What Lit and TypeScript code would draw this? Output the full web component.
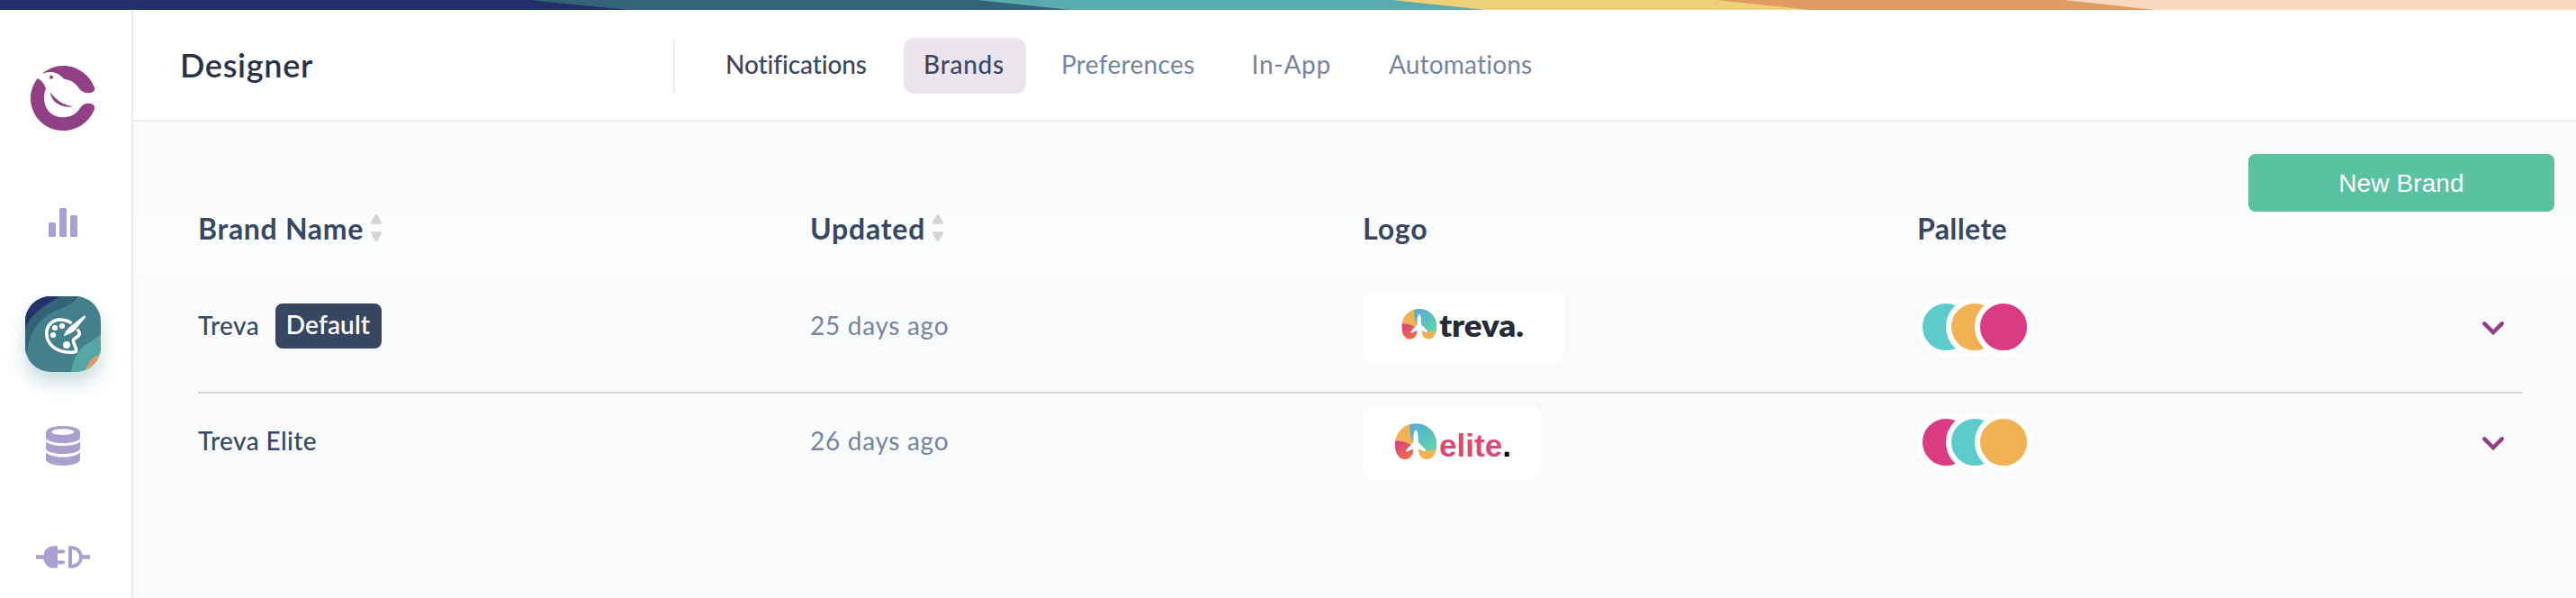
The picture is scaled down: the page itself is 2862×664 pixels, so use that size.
import { LitElement, html, svg, css } from "lit";

interface Brand {
  name: string;
  isDefault: boolean;
  updated: string;
  logo: "treva" | "elite";
  palette: string[];
}

const BRANDS: Brand[] = [
  { name: "Treva", isDefault: true, updated: "25 days ago", logo: "treva", palette: ["teal", "amber", "pink"] },
  { name: "Treva Elite", isDefault: false, updated: "26 days ago", logo: "elite", palette: ["pink", "teal", "amber"] },
];

/* Coloured stripe along the top edge of the window */
class TopStripe extends LitElement {
  static styles = css`
    :host, svg { display: block; }
    svg { width: 100%; height: 11px; }
  `;
  render() {
    return html`<svg viewBox="0 0 2862 11" preserveAspectRatio="none">
      <rect width="2862" height="11" fill="#fad9bf" />
      <polygon points="0,0 2293,0 2394,11 0,11" fill="#e19a62" />
      <polygon points="0,0 1907,0 2011,11 0,11" fill="#eed079" />
      <polygon points="0,0 1547,0 1650,11 0,11" fill="#59abae" />
      <polygon points="0,0 1086,0 1189,11 0,11" fill="#346379" />
      <polygon points="0,0 589,0 698,11 0,11" fill="#23306a" />
    </svg>`;
  }
}
customElements.define("top-stripe", TopStripe);

/* Icon rail on the left */
class SideRail extends LitElement {
  static styles = css`
    :host {
      display: flex; flex-direction: column; align-items: center;
      box-sizing: border-box; width: 148px; padding: 62px 6px 0 0;
      border-right: 2px solid #e9edf0; background: #fff; color: #ab9fcf;
      overflow: hidden;
    }
    svg { display: block; }
    .logo { width: 72px; height: 72px; margin-bottom: 60px; color: #914085; flex: none; }
    .nav { display: flex; flex-direction: column; gap: 40px; }
    .item { width: 84px; height: 84px; flex: none; display: grid; place-items: center; }
    .active { border-radius: 28px; overflow: hidden; }
    .lift { border-radius: 28px; box-shadow: 0 12px 20px rgba(58, 124, 135, 0.28); }
    .plug { margin-top: -1px; }
  `;
  render() {
    return html`
      <svg class="logo" viewBox="0 0 72 72" fill="currentColor">
        <path d="M12.7 8.7 C20 3 28 0 36 0 C52 0 65.5 10 70.8 24 C71.8 27 70 29.6 66.5 30 C62 30.6 57.5 29.5 55 26.5 C50.5 20.5 46 15.5 37.8 15 C34.5 12.5 31 8 25 7.3 C20 6.2 17 7.6 12.7 8.7Z" />
        <path d="M7.7 14 C12.5 16.5 15.5 20 17 25.5 C15.8 28 15 31 15 37 C15.5 49 24 57.3 36 57.3 C45 57.3 51 53.5 55 47 C58 42.5 62 41.3 66.5 42 C70 42.6 71.8 45.4 70.8 48.4 C65.5 62 52 72 36 72 C16 72 0 56 0 36 C0 28 2.8 20.5 7.7 14Z" />
        <circle cx="23" cy="12.7" r="2" />
        <path d="M21.6 29 C27 37 36 44 47.8 45.3 C35 47.5 23 41 21.6 29Z" />
      </svg>
      <nav class="nav">
        <div class="item">
          <svg width="32" height="32" viewBox="0 0 32 32" fill="currentColor">
            <rect y="16" width="8" height="16" rx="1.6" /><rect x="12" width="8" height="32" rx="1.6" /><rect x="24" y="8" width="8" height="24" rx="1.6" />
          </svg>
        </div>
        <div class="lift">
          <svg class="item active" viewBox="0 0 84 84">
            <rect width="84" height="84" fill="#44808c" />
            <path d="M59 0 C50 13 38 12 25 21 C9 32 3 48 1.5 66 L0 66 V0Z" fill="#336377" />
            <path d="M38 0 C28 8 6 16 0 37 V0Z" fill="#24316b" />
            <path d="M84 41 C78 50 69 50 62 58 C55 66 53 74 51 84 H84Z" fill="#57a6a6" />
            <path d="M84 64 C75 67 69 73 66.5 84 H84Z" fill="#e19a62" />
            <path d="M51.5 30 C47 26.5 42 25.8 37.5 26 C29.5 26.5 23.8 33 23.8 41 C23.8 53 34 62.2 50 62.2 C56 62.5 57.5 61.5 56.3 57.5 C55 54 53 51 53.5 48.6 C54.5 46 59.5 45.5 60.3 42 C60.6 39.5 59 38.4 58 36.5" fill="none" stroke="#fff" stroke-width="3.6" />
            <path d="M42.8 44.3 C44 39.5 47.5 35 52 32 L64.8 21.9 C66.3 20.8 67.8 22.3 66.8 23.7 L56.2 36.5 C53 40.5 47.5 42.5 42.8 44.3Z" fill="#fff" />
            <g fill="#fff"><circle cx="33" cy="35" r="3.1" /><circle cx="41" cy="33" r="3.1" /><circle cx="31" cy="43" r="3.1" /><circle cx="46" cy="54" r="4" /></g>
          </svg>
        </div>
        <div class="item">
          <svg width="38" height="44" viewBox="0 0 38 44" fill="currentColor">
            <path fill-rule="evenodd" d="M19 0 C29 0 38 2.6 38 7 V13 C38 16.5 29.5 19 19 19 C8.500 19 0 16.5 0 13 V7 C0 2.600 9 0 19 0Z M19 3.200 C12 3.200 6.600 4.600 6.600 6.500 C6.600 8.400 12 9.900 19 9.900 C26 9.900 31.400 8.400 31.400 6.500 C31.400 4.600 26 3.200 19 3.200Z" />
            <path d="M0 17.500 C4 20.500 11 22 19 22 C27 22 34 20.500 38 17.500 V25 C38 28.500 29.500 31 19 31 C8.500 31 0 28.500 0 25Z" />
            <path d="M0 29.500 C4 33 11 34.500 19 34.500 C27 34.500 34 33 38 29.500 V37 C38 41 29.500 44 19 44 C8.500 44 0 41 0 37Z" />
          </svg>
        </div>
        <div class="item">
          <svg class="plug" width="60" height="25" viewBox="0 0 60 25" fill="currentColor">
            <path d="M0 10.300 H8.500 C9.500 4 14 0.300 19.500 0.300 H24 V4.600 H30.300 C32.600 4.600 32.600 8.400 30.300 8.400 H24 V16.600 H30.300 C32.600 16.600 32.600 20.400 30.300 20.400 H24 V24.800 H19.500 C14 24.800 9.500 21 8.500 14.700 H0Z" />
            <path fill-rule="evenodd" d="M36 0.300 H39.500 C46 0.300 50.500 4.500 51.700 10.300 H60 V14.700 H51.700 C50.500 20.600 46 24.800 39.500 24.800 H36Z M40 4.300 V20.800 C45 20.500 48 17 48 12.500 C48 8 45 4.600 40 4.300Z" />
          </svg>
        </div>
      </nav>
    `;
  }
}
customElements.define("side-rail", SideRail);

/* Page title and section tabs */
class PageHeader extends LitElement {
  static styles = css`
    :host {
      display: flex; align-items: center; height: 122px; padding: 0 0 0 52px;
      border-bottom: 2px solid #e9edf0; background: #fff;
      font-variant-ligatures: none;
    }
    h1 { margin: 0 0 1px; width: 548px; font-size: 36px; line-height: 44px; font-weight: 600; letter-spacing: 0.7px; color: #283349; }
    .tabs { display: flex; align-items: center; height: 60px; padding-left: 34px; border-left: 2px solid #e9edf0; margin-top: 2px; }
    .tab { height: 62px; line-height: 58px; padding: 0 22px; border-radius: 12px; font-size: 28px; box-sizing: border-box; white-space: nowrap; color: #77849f; }
    .notifications { width: 201px; font-weight: 500; color: #384863; letter-spacing: -0.1px; margin-right: 19px; }
    .brands { width: 136px; background: #ebe4ec; font-weight: 500; color: #384863; letter-spacing: 0.74px; margin-right: 17px; }
    .preferences { width: 189px; letter-spacing: 0.31px; margin-right: 22.5px; }
    .inapp { width: 129px; letter-spacing: 0.76px; margin-right: 23.5px; }
    .automations { letter-spacing: 0.2px; }
  `;
  render() {
    return html`
      <h1>Designer</h1>
      <nav class="tabs">
        <span class="tab notifications">Notifications</span>
        <span class="tab brands">Brands</span>
        <span class="tab preferences">Preferences</span>
        <span class="tab inapp">In-App</span>
        <span class="tab automations">Automations</span>
      </nav>
    `;
  }
}
customElements.define("page-header", PageHeader);

/* Brand logo on its white card */
class BrandLogo extends LitElement {
  static properties = { kind: { type: String } };
  declare kind: string;
  static styles = css`
    :host { display: block; }
    svg { display: block; background: #fff; border-radius: 12px; }
    .treva { font: 800 33px Lato, sans-serif; }
    .elite { font: 700 35px "Liberation Sans", sans-serif; }
  `;
  mark() {
    return svg`
      <defs>
        <linearGradient id="sky" x1="0" y1="0" x2="0.7" y2="1"><stop offset="0" stop-color="#55a8e0" /><stop offset="1" stop-color="#62d2a8" /></linearGradient>
        <linearGradient id="sun" x1="0" y1="0" x2="0.6" y2="1"><stop offset="0" stop-color="#d93a85" /><stop offset="1" stop-color="#ee7048" /></linearGradient>
        <clipPath id="shape"><path d="M19.500 0 C30.500 0 39 8.500 39 19.500 C39 28 35 33.500 30 33.500 C25 33.500 21.900 29.500 21.900 24 V20 H17.100 V24 C17.100 29.500 14 33.500 9 33.500 C4 33.500 0 28 0 19.500 C0 8.500 8.500 0 19.500 0Z" /></clipPath>
      </defs>
      <g clip-path="url(#shape)">
        <rect width="39" height="34" fill="#f1b154" />
        <path d="M14.500 0 H39 V25 C34 23.500 29 27 24 25 L19 20 C15 15 12.500 9 14.500 0Z" fill="url(#sky)" />
        <path d="M0 16.500 C6 16 12 17.500 17.100 22 V34 H0Z" fill="url(#sun)" />
      </g>
      <path d="M19.400 6 C20.700 6 21.300 8.500 21.500 12 L21.700 17.500 L28.300 24 C29 25 28.700 26.300 27.500 26 L21.900 23.700 V30 H17.100 V23.700 L11.300 26.400 C10 26.500 9.900 25.200 10.700 24.400 L17.100 17.500 L17.300 12 C17.500 8.500 18.100 6 19.400 6Z" fill="#fff" />`;
  }
  render() {
    return this.kind === "treva"
      ? html`<svg width="224" height="80" viewBox="0 0 224 80">
          <g transform="translate(43.300 20)">${this.mark()}</g>
          <text class="treva" x="85" y="50.500" textLength="94" lengthAdjust="spacingAndGlyphs" fill="#252b38">treva.</text>
        </svg>`
      : html`<svg width="198" height="80" viewBox="0 0 198 80">
          <g transform="translate(36 19.300) scale(1.185)">${this.mark()}</g>
          <text class="elite" x="85" y="55.500" fill="#de4879" textLength="80">elite<tspan fill="#050505">.</tspan></text>
        </svg>`;
  }
}
customElements.define("brand-logo", BrandLogo);

/* Sortable table of brands */
class BrandTable extends LitElement {
  static styles = css`
    :host { display: block; color: #384863; font-variant-ligatures: none; }
    .grid { display: grid; grid-template-columns: 680px 614px 616px 1fr auto; }
    .head { height: 72px; padding: 0 60px 0 72px; background: #fbfcfe; font-size: 32px; font-weight: 700; line-height: 37px; letter-spacing: 0.7px; }
    .head span { display: flex; gap: 7px; }
    .head svg { display: block; margin-top: 2px; }
    .updated-head { letter-spacing: 0.8px; }
    .logo-head { letter-spacing: 0.9px; }
    .palette-head { letter-spacing: 0.4px; }
    .row { height: 112px; margin: 0 60px 0 72px; padding-bottom: 16px; align-items: center; font-size: 28px; line-height: 34px; }
    .row + .row { border-top: 2px solid #d3d5d8; height: 108px; }
    .row + .row .name, .row + .row .updated { padding-bottom: 4px; }
    .name { display: flex; align-items: center; gap: 17.5px; font-weight: 500; letter-spacing: 0.4px; padding-bottom: 2px; }
    .label { padding-bottom: 3px; }
    .row + .row .label { padding-bottom: 0; }
    .badge { height: 50px; line-height: 47px; width: 118px; box-sizing: border-box; text-align: center; border-radius: 8px; background: #374661; color: #fff; font-weight: 600; letter-spacing: 0.13px; }
    .updated { color: #77849f; letter-spacing: 0.7px; padding-bottom: 4px; }
    .swatches { display: flex; }
    .swatch { width: 52px; height: 52px; border: 6px solid #fff; border-radius: 50%; }
    .swatch + .swatch { margin-left: -32px; }
    .teal { background: #5dcbcb; }
    .amber { background: #f2b253; }
    .pink { background: #da3b82; }
    .chevron { display: block; margin: 2px 20px 0 0; }
  `;
  sortIcon() {
    return html`<svg width="14" height="32" viewBox="0 0 14 32" fill="#d5d5d5" stroke="#d5d5d5" stroke-width="2" stroke-linejoin="round">
      <path d="M7 1.500 L12.300 10.700 H1.700Z" /><path d="M7 30.500 L12.300 21.300 H1.700Z" />
    </svg>`;
  }
  render() {
    return html`
      <div class="grid head">
        <span>Brand Name ${this.sortIcon()}</span>
        <span class="updated-head">Updated ${this.sortIcon()}</span>
        <span class="logo-head">Logo</span>
        <span class="palette-head">Pallete</span>
      </div>
      ${BRANDS.map((b) => html`
        <div class="grid row">
          <div class="name"><span class="label">${b.name}</span>${b.isDefault ? html`<span class="badge">Default</span>` : ""}</div>
          <div class="updated">${b.updated}</div>
          <brand-logo .kind=${b.logo}></brand-logo>
          <div class="swatches">${b.palette.map((c) => html`<i class="swatch ${c}"></i>`)}</div>
          <svg class="chevron" width="24" height="16" viewBox="0 0 24 16" fill="none" stroke="#914085" stroke-width="4.500" stroke-linecap="round"><path d="M2.300 3.300 L12 13 L21.700 3.300" /></svg>
        </div>`)}
    `;
  }
}
customElements.define("brand-table", BrandTable);

class AppRoot extends LitElement {
  static styles = css`
    :host { display: flex; flex-direction: column; height: 664px; overflow: hidden; background: #f9fafc; font-family: Lato, sans-serif; }
    .body { display: flex; flex: 1; min-height: 0; }
    .main { flex: 1; min-width: 0; }
    .actions { display: flex; justify-content: flex-end; padding: 36px 24px 0 0; }
    .new { width: 340px; height: 64px; border: 0; padding: 2px 0 0; border-radius: 8px; background: #5ac2a0; color: #fff; font: 28px "Liberation Sans", sans-serif; letter-spacing: 0.1px; }
  `;
  render() {
    return html`
      <top-stripe></top-stripe>
      <div class="body">
        <side-rail></side-rail>
        <main class="main">
          <page-header></page-header>
          <div class="actions"><button class="new">New Brand</button></div>
          <brand-table></brand-table>
        </main>
      </div>
    `;
  }
}
customElements.define("app-root", AppRoot);
